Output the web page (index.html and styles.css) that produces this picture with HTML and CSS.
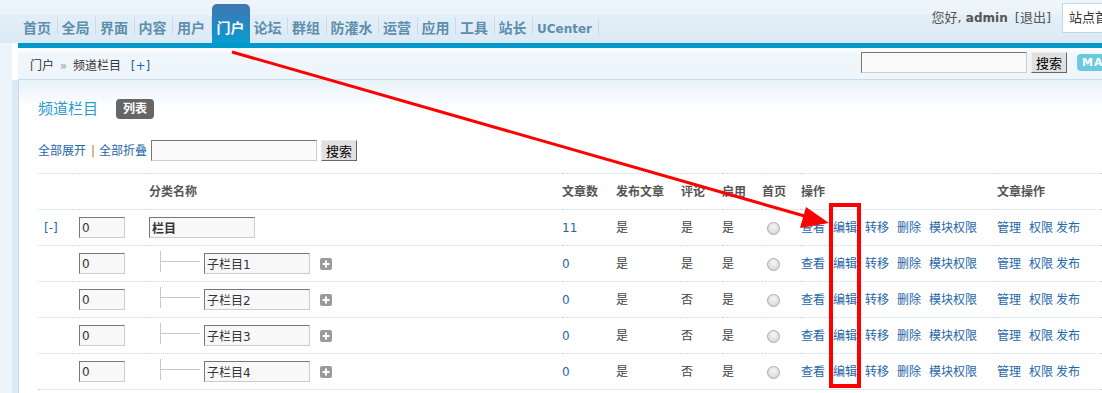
FILE: index.html
```html
<!DOCTYPE html>
<html lang="zh-CN">
<head>
    <meta charset="UTF-8">
    <meta name="viewport" content="width=device-width, initial-scale=1.0">
    <title>管理中心 - 门户 - 频道栏目</title>
    <link rel="stylesheet" href="styles.css">
</head>
<body>
    <!-- Top navigation -->
    <div class="header">
        <ul class="nav">
            <li><a href="#">首页</a></li>
            <li><a href="#">全局</a></li>
            <li><a href="#">界面</a></li>
            <li><a href="#">内容</a></li>
            <li><a href="#">用户</a></li>
            <li class="on"><a href="#">门户</a></li>
            <li><a href="#">论坛</a></li>
            <li><a href="#">群组</a></li>
            <li><a href="#">防灌水</a></li>
            <li><a href="#">运营</a></li>
            <li><a href="#">应用</a></li>
            <li><a href="#">工具</a></li>
            <li><a href="#">站长</a></li>
            <li class="uc"><a href="#">UCenter</a></li>
        </ul>
        <div class="user">
            <span class="hello">您好, <b>admin</b> <a href="#">[退出]</a></span>
            <div class="site-sel">站点首页</div>
        </div>
    </div>

    <div class="frame">
        <div class="frame-top">
            <div class="bar"></div>
            <div class="crumb">
                <div class="crumb-path">门户 <span class="arr">»</span> 频道栏目 <a class="add" href="#">[+]</a></div>
                <div class="crumb-search">
                    <input class="txt search-txt" type="text">
                    <button class="btn">搜索</button>
                    <span class="map">MAP</span>
                </div>
            </div>
        </div>

        <div class="content">
            <div class="title">
                <h3>频道栏目</h3>
                <span class="badge">列表</span>
            </div>

            <div class="toolbar">
                <a href="#">全部展开</a><span class="pipe">|</span><a href="#">全部折叠</a>
                <input class="txt search-txt" type="text">
                <button class="btn">搜索</button>
            </div>

            <table class="cat-table">
                <colgroup>
                    <col class="c-fold">
                    <col class="c-order">
                    <col class="c-name">
                    <col class="c-num">
                    <col class="c-pub">
                    <col class="c-cmt">
                    <col class="c-on">
                    <col class="c-home">
                    <col class="c-ops">
                    <col>
                </colgroup>
                <tr>
                    <th></th>
                    <th></th>
                    <th>分类名称</th>
                    <th>文章数</th>
                    <th>发布文章</th>
                    <th>评论</th>
                    <th>启用</th>
                    <th>首页</th>
                    <th>操作</th>
                    <th>文章操作</th>
                </tr>
                <tr>
                    <td class="fold"><a href="#">[-]</a></td>
                    <td><input class="txt order" type="text" value="0"></td>
                    <td><input class="txt name strong" type="text" value="栏目"></td>
                    <td><a href="#">11</a></td>
                    <td>是</td>
                    <td>是</td>
                    <td>是</td>
                    <td><span class="radio"></span></td>
                    <td class="ops"><a href="#">查看</a><a href="#">编辑</a><a href="#">转移</a><a href="#">删除</a><a href="#">模块权限</a></td>
                    <td class="art-ops"><a href="#">管理</a><a href="#">权限</a><a href="#">发布</a></td>
                </tr>
                <tr>
                    <td></td>
                    <td><input class="txt order" type="text" value="0"></td>
                    <td>
                        <div class="tree-cell">
                            <span class="tree"></span>
                            <input class="txt name" type="text" value="子栏目1">
                            <span class="plus"><svg width="12" height="12" viewBox="0 0 12 12"><rect width="12" height="12" rx="2" fill="#9a9a9a"/><path d="M6 2.5v7M2.5 6h7" stroke="#fff" stroke-width="2"/></svg></span>
                        </div>
                    </td>
                    <td><a href="#">0</a></td>
                    <td>是</td>
                    <td>是</td>
                    <td>是</td>
                    <td><span class="radio"></span></td>
                    <td class="ops"><a href="#">查看</a><a href="#">编辑</a><a href="#">转移</a><a href="#">删除</a><a href="#">模块权限</a></td>
                    <td class="art-ops"><a href="#">管理</a><a href="#">权限</a><a href="#">发布</a></td>
                </tr>
                <tr>
                    <td></td>
                    <td><input class="txt order" type="text" value="0"></td>
                    <td>
                        <div class="tree-cell">
                            <span class="tree"></span>
                            <input class="txt name" type="text" value="子栏目2">
                            <span class="plus"><svg width="12" height="12" viewBox="0 0 12 12"><rect width="12" height="12" rx="2" fill="#9a9a9a"/><path d="M6 2.5v7M2.5 6h7" stroke="#fff" stroke-width="2"/></svg></span>
                        </div>
                    </td>
                    <td><a href="#">0</a></td>
                    <td>是</td>
                    <td>否</td>
                    <td>是</td>
                    <td><span class="radio"></span></td>
                    <td class="ops"><a href="#">查看</a><a href="#">编辑</a><a href="#">转移</a><a href="#">删除</a><a href="#">模块权限</a></td>
                    <td class="art-ops"><a href="#">管理</a><a href="#">权限</a><a href="#">发布</a></td>
                </tr>
                <tr>
                    <td></td>
                    <td><input class="txt order" type="text" value="0"></td>
                    <td>
                        <div class="tree-cell">
                            <span class="tree"></span>
                            <input class="txt name" type="text" value="子栏目3">
                            <span class="plus"><svg width="12" height="12" viewBox="0 0 12 12"><rect width="12" height="12" rx="2" fill="#9a9a9a"/><path d="M6 2.5v7M2.5 6h7" stroke="#fff" stroke-width="2"/></svg></span>
                        </div>
                    </td>
                    <td><a href="#">0</a></td>
                    <td>是</td>
                    <td>否</td>
                    <td>是</td>
                    <td><span class="radio"></span></td>
                    <td class="ops"><a href="#">查看</a><a href="#">编辑</a><a href="#">转移</a><a href="#">删除</a><a href="#">模块权限</a></td>
                    <td class="art-ops"><a href="#">管理</a><a href="#">权限</a><a href="#">发布</a></td>
                </tr>
                <tr>
                    <td></td>
                    <td><input class="txt order" type="text" value="0"></td>
                    <td>
                        <div class="tree-cell">
                            <span class="tree"></span>
                            <input class="txt name" type="text" value="子栏目4">
                            <span class="plus"><svg width="12" height="12" viewBox="0 0 12 12"><rect width="12" height="12" rx="2" fill="#9a9a9a"/><path d="M6 2.5v7M2.5 6h7" stroke="#fff" stroke-width="2"/></svg></span>
                        </div>
                    </td>
                    <td><a href="#">0</a></td>
                    <td>是</td>
                    <td>否</td>
                    <td>是</td>
                    <td><span class="radio"></span></td>
                    <td class="ops"><a href="#">查看</a><a href="#">编辑</a><a href="#">转移</a><a href="#">删除</a><a href="#">模块权限</a></td>
                    <td class="art-ops"><a href="#">管理</a><a href="#">权限</a><a href="#">发布</a></td>
                </tr>
            </table>
        </div>
    </div>

    <!-- Red annotation drawn over the page -->
    <svg class="mark" width="1102" height="393" viewBox="0 0 1102 393">
        <line x1="232" y1="52" x2="808" y2="217" stroke="#f00" stroke-width="3"/>
        <polygon points="829,223 806,207 800,228" fill="#f00"/>
        <rect x="831" y="205" width="28" height="181" fill="none" stroke="#f00" stroke-width="4"/>
    </svg>
</body>
</html>
```

FILE: styles.css
```css
* {
    margin: 0;
    padding: 0;
    box-sizing: border-box;
}

body {
    font: 12px/1.5 "DejaVu Sans", "Noto Sans CJK SC", sans-serif;
    color: #333;
    background: #edf5fb;
    width: 1102px;
    height: 393px;
    overflow: hidden;
    position: relative;
}

a {
    color: #2366a8;
    text-decoration: none;
}

/* Header */
.header {
    height: 43px;
    display: flex;
    justify-content: space-between;
    background: linear-gradient(#eff6fb 0, #eaf3fa 15px, #e3eff8 15px, #dbeaf5 43px);
}

.nav {
    list-style: none;
    display: flex;
    align-items: flex-end;
    padding-left: 19px;
}

.nav li {
    line-height: 28px;
    padding: 0 6.5px 0 4px;
    background: linear-gradient(#c9dbe7, #c9dbe7) no-repeat right 0 top 4px / 1px 17px;
}

.nav a {
    color: #5d8eab;
    font-size: 14px;
    font-weight: bold;
    font-family: "Noto Sans CJK SC", sans-serif;
}

.nav li.on {
    padding: 9px 5px 0;
    border-radius: 5px 5px 0 0;
    background: linear-gradient(#3f76b0, #0b9bd1);
}

.nav li.on a {
    color: #fff;
}

.nav li.uc a {
    font-family: "DejaVu Sans", sans-serif;
    font-size: 12px;
}

.user {
    display: flex;
    align-items: flex-start;
    padding-top: 3px;
    margin-right: -20px;
}

.hello {
    line-height: 30px;
    font-size: 13px;
    color: #555;
    margin-right: 11px;
}

.hello b {
    font-size: 12px;
    margin-right: 3px;
}

.hello a {
    color: #555;
}

.site-sel {
    width: 60px;
    height: 30px;
    border: 1px solid #c4d6e2;
    background: #fff;
    font-size: 13px;
    line-height: 28px;
    padding-left: 6px;
    white-space: nowrap;
    overflow: hidden;
}

/* Frame */
.frame {
    margin-left: 12px;
}

.frame-top {
    border-left: 6px solid #fff;
}

.bar {
    height: 5px;
    background: #0099cc;
}

.crumb {
    height: 32px;
    display: flex;
    align-items: center;
    justify-content: space-between;
    padding-left: 12px;
    background: linear-gradient(#fff 0, #f0f7fc 6px, #eef6fb);
    border-bottom: 1px solid #c8dcec;
    overflow: hidden;
}

.crumb-path {
    padding-top: 4px;
    color: #333;
}

.crumb-path .arr {
    color: #8c9fb0;
    margin: 0 2px;
}

.crumb-path .add {
    margin-left: 6px;
}

.crumb-search {
    display: flex;
    align-items: center;
    padding-bottom: 2px;
}

.txt {
    height: 21px;
    border: 1px solid;
    border-color: #777 #ccc #ccc #777;
    background: #f8f8f8;
    font: 12px "DejaVu Sans", "Noto Sans CJK SC", sans-serif;
    color: #333;
    padding: 0 2px;
    outline: none;
}

.search-txt {
    width: 166px;
    background: #fafafa;
}

.btn {
    width: 36px;
    height: 21px;
    margin-left: 4px;
    border: 1px solid;
    border-color: #ececec #666 #666 #ececec;
    background: #e0e0e0;
    font: 13px "Noto Sans CJK SC", sans-serif;
    color: #000;
    line-height: 19px;
}

.map {
    width: 45px;
    height: 17px;
    margin-left: 10px;
    margin-right: -20px;
    padding-left: 5px;
    border-radius: 4px;
    background: #6ccae0;
    color: #fff;
    font: bold 11px/17px "DejaVu Sans", sans-serif;
    letter-spacing: 1px;
}

/* Content */
.content {
    height: 320px;
    border-left: 6px solid #dde9f3;
    box-shadow: inset 1px 0 #c4d9ea;
    background: linear-gradient(#e8f2f9, #fff 28px);
    padding: 19px 0 0 20px;
}

.title {
    display: flex;
    align-items: center;
    height: 20px;
}

.title h3 {
    font-size: 15px;
    font-weight: normal;
    color: #2a9ad3;
    margin-right: 18px;
}

.badge {
    height: 20px;
    padding: 0 7px;
    border-radius: 4px;
    background: #666;
    color: #fff;
    font-weight: bold;
    line-height: 20px;
}

.toolbar {
    display: flex;
    align-items: center;
    height: 21px;
    margin-top: 21px;
}

.toolbar .pipe {
    color: #c8772e;
    margin: 0 4px 0 5px;
}

.toolbar .search-txt {
    margin-left: 4px;
}

/* Category table */
.cat-table {
    margin-top: 12px;
    width: 1064px;
    table-layout: fixed;
    border-collapse: separate;
    border-spacing: 0;
    border-bottom: 1px dotted #c3d8e8;
}

.c-fold { width: 41px; }
.c-order { width: 70px; }
.c-name { width: 413px; }
.c-num { width: 54px; }
.c-pub { width: 65px; }
.c-cmt { width: 41px; }
.c-on { width: 40px; }
.c-home { width: 39px; }
.c-ops { width: 196px; }

.cat-table th,
.cat-table td {
    height: 36px;
    padding: 0;
    border-top: 1px dotted #c3d8e8;
    text-align: left;
    vertical-align: middle;
    white-space: nowrap;
}

.cat-table th {
    color: #555;
    font-weight: bold;
}

.cat-table td {
    color: #444;
}

.fold {
    padding-left: 6px !important;
}

.order {
    width: 46px;
}

.name {
    width: 106px;
}

.strong {
    font-weight: bold;
}

.tree-cell {
    display: flex;
    align-items: center;
    padding-left: 11px;
}

.tree {
    width: 40px;
    height: 21px;
    margin-bottom: 4px;
    border-left: 1px solid #c8c8c8;
    background: linear-gradient(#c8c8c8, #c8c8c8) no-repeat 0 10px / 100% 1px;
}

.tree-cell .name {
    margin-left: 4px;
}

.plus {
    display: flex;
    margin-left: 10px;
}

.radio {
    display: inline-block;
    width: 13px;
    height: 13px;
    margin-left: 5px;
    vertical-align: middle;
    border: 1px solid #a9a9a9;
    border-radius: 50%;
    background: radial-gradient(circle at 50% 35%, #f7f7f7, #cfcfcf);
}

.ops a {
    margin-right: 8px;
}

.art-ops a:first-child {
    margin-right: 8px;
}

.art-ops a:nth-child(2) {
    margin-right: 3px;
}

.mark {
    position: absolute;
    top: 0;
    left: 0;
    pointer-events: none;
}
```
